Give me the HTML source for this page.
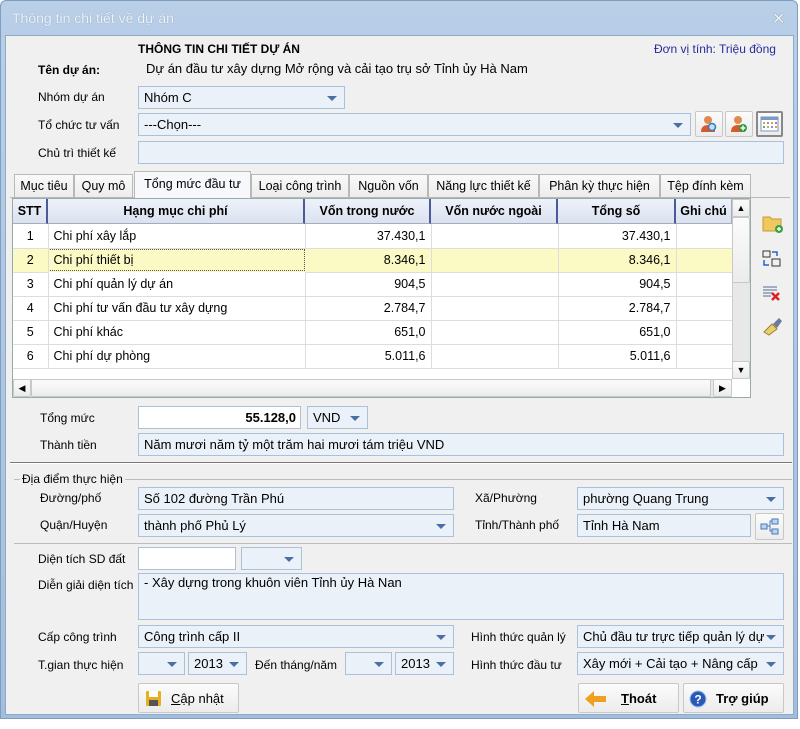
<!DOCTYPE html>
<html><head><meta charset="utf-8"><style>
*{box-sizing:border-box;margin:0;padding:0}
body{width:800px;height:729px;background:#fff;font-family:"Liberation Sans",Arial,sans-serif;font-size:12px;color:#000;position:relative;overflow:hidden}
.a{position:absolute}
.win{left:0;top:0;width:798px;height:719px;background:linear-gradient(#b9cfe8,#a3bedd);border-radius:6px 6px 0 0;border:1px solid #7f9dbf}
.body{left:5px;top:35px;width:789px;height:680px;background:#f0f0f0;border:1px solid #8fa9c8}
.lbl{white-space:nowrap}
.inp{background:#eaf1f9;border:1px solid #abc1d9;height:23px;line-height:21px;padding-left:5px;white-space:nowrap;overflow:hidden;font-size:13px}
.wh{background:#fff}
.dd::after{content:"";position:absolute;right:7px;top:9px;border-left:5px solid transparent;border-right:5px solid transparent;border-top:5px solid #4a6fa5}
.btn{background:linear-gradient(#fbfbfb,#ececec);border:1px solid #c8c8c8;border-radius:2px}
.tab{top:174px;height:23px;border:1px solid #b8b8b8;border-bottom:none;background:linear-gradient(#fafafa,#ececec);line-height:22px;text-align:center;font-size:12.5px}
.grid{left:12px;top:198px;width:739px;height:200px;border:1px solid #9aa;background:#fff}
.th{top:0;height:25px;background:linear-gradient(#eef2fa,#dae2f0);border-right:2px solid #4b5a9a;border-bottom:1px solid #aab;font-weight:bold;line-height:25px;text-align:center;font-size:12.5px}
.td{height:24px;border-right:1px solid #ddd;border-bottom:1px solid #ddd;line-height:22px;padding:0 5px;white-space:nowrap}
.r{text-align:right}
</style></head><body>
<div class="a win"></div>
<div class="a lbl" style="left:12px;top:10px;font-size:14px;color:#eef2f8;text-shadow:0 0 1px #7990b0">Thông tin chi tiết về dự án</div>
<div class="a" style="left:772px;top:9px;font-size:16px;color:#eef2f8;text-shadow:0 0 1px #556">✕</div>
<div class="a body"></div>

<div class="a lbl" style="left:138px;top:42px;font-weight:bold">THÔNG TIN CHI TIẾT DỰ ÁN</div>
<div class="a lbl" style="left:654px;top:42px;color:#2a2aa0">Đơn vị tính: Triệu đồng</div>
<div class="a lbl" style="left:38px;top:63px;font-weight:bold">Tên dự án:</div>
<div class="a lbl" style="left:146px;top:61px;font-size:13px">Dự án đầu tư xây dựng Mở rộng và cải tạo trụ sở Tỉnh ủy Hà Nam</div>

<div class="a lbl" style="left:38px;top:90px">Nhóm dự án</div>
<div class="a inp dd" style="left:138px;top:86px;width:207px">Nhóm C</div>
<div class="a lbl" style="left:38px;top:118px">Tổ chức tư vấn</div>
<div class="a inp dd" style="left:138px;top:113px;width:553px">---Chọn---</div>
<div class="a btn" style="left:695px;top:111px;width:28px;height:26px"><svg width="26" height="24"><circle cx="12" cy="8" r="4" fill="#e08a50"/><path d="M5 20q0-7 7-7t7 7z" fill="#d65a2a"/><circle cx="16" cy="15" r="3.5" fill="#bfe0f8" stroke="#3a78b8" stroke-width="1.5"/></svg></div>
<div class="a btn" style="left:725px;top:111px;width:28px;height:26px"><svg width="26" height="24"><circle cx="12" cy="8" r="4" fill="#e08a50"/><path d="M5 20q0-7 7-7t7 7z" fill="#d65a2a"/><circle cx="17" cy="16" r="4" fill="#2a9a3a"/><path d="M17 13.5v5M14.5 16h5" stroke="#fff" stroke-width="1.5"/></svg></div>
<div class="a btn" style="left:756px;top:111px;width:27px;height:26px;border:2px solid #888"><svg width="23" height="22"><rect x="3" y="4" width="17" height="14" fill="#fff" stroke="#7a9bc6"/><rect x="3" y="4" width="17" height="3" fill="#7a9bc6"/><g fill="#e8a040"><rect x="5" y="9" width="2" height="2"/><rect x="9" y="9" width="2" height="2" fill="#6aa0e0"/><rect x="13" y="9" width="2" height="2"/><rect x="17" y="9" width="2" height="2" fill="#d060c0"/><rect x="5" y="13" width="2" height="2" fill="#60b060"/><rect x="9" y="13" width="2" height="2"/><rect x="13" y="13" width="2" height="2" fill="#6aa0e0"/><rect x="17" y="13" width="2" height="2"/></g></svg></div>
<div class="a lbl" style="left:38px;top:146px">Chủ trì thiết kế</div>
<div class="a inp" style="left:138px;top:141px;width:646px"></div>

<div class="a tab" style="left:14px;width:60px">Mục tiêu</div>
<div class="a tab" style="left:74px;width:59px">Quy mô</div>
<div class="a tab" style="left:251px;width:98px">Loại công trình</div>
<div class="a tab" style="left:349px;width:79px">Nguồn vốn</div>
<div class="a tab" style="left:428px;width:111px">Năng lực thiết kế</div>
<div class="a tab" style="left:539px;width:121px">Phân kỳ thực hiện</div>
<div class="a tab" style="left:660px;width:91px">Tệp đính kèm</div>
<div class="a" style="left:10px;top:197px;width:780px;height:1px;background:#b8b8b8"></div>
<div class="a tab" style="left:134px;top:171px;width:117px;height:27px;background:#f6f8fb;line-height:24px">Tổng mức đầu tư</div>

<div class="a grid">
<div class="a th" style="left:0;width:35px">STT</div>
<div class="a th" style="left:35px;width:257px">Hạng mục chi phí</div>
<div class="a th" style="left:292px;width:126px">Vốn trong nước</div>
<div class="a th" style="left:418px;width:127px">Vốn nước ngoài</div>
<div class="a th" style="left:545px;width:118px">Tổng số</div>
<div class="a th" style="left:663px;width:56px;border-right:1px solid #aab">Ghi chú</div>
<div class="a" style="left:0;top:49px;width:719px;height:24px;background:#fbf9c4"></div>
<div class="a" style="left:35px;top:50px;width:257px;height:22px;border:1px dotted #555"></div>
<div class="a" style="left:0;top:25px">
<table style="border-collapse:collapse;font-size:12.5px">
<tr><td class="td" style="width:35px;text-align:center">1</td><td class="td" style="width:257px">Chi phí xây lắp</td><td class="td r" style="width:126px">37.430,1</td><td class="td" style="width:127px"></td><td class="td r" style="width:118px">37.430,1</td><td class="td" style="width:56px"></td></tr>
<tr><td class="td" style="text-align:center">2</td><td class="td" style="border:none">Chi phí thiết bị</td><td class="td r">8.346,1</td><td class="td"></td><td class="td r">8.346,1</td><td class="td"></td></tr>
<tr><td class="td" style="text-align:center">3</td><td class="td">Chi phí quản lý dự án</td><td class="td r">904,5</td><td class="td"></td><td class="td r">904,5</td><td class="td"></td></tr>
<tr><td class="td" style="text-align:center">4</td><td class="td">Chi phí tư vấn đầu tư xây dựng</td><td class="td r">2.784,7</td><td class="td"></td><td class="td r">2.784,7</td><td class="td"></td></tr>
<tr><td class="td" style="text-align:center">5</td><td class="td">Chi phí khác</td><td class="td r">651,0</td><td class="td"></td><td class="td r">651,0</td><td class="td"></td></tr>
<tr><td class="td" style="text-align:center">6</td><td class="td">Chi phí dự phòng</td><td class="td r">5.011,6</td><td class="td"></td><td class="td r">5.011,6</td><td class="td"></td></tr>
</table></div>
<div class="a" style="left:719px;top:0;width:18px;height:180px;background:#e8e8e8;border-left:1px solid #ccc"></div>
<div class="a btn" style="left:719px;top:0;width:18px;height:18px;text-align:center;font-size:9px;line-height:16px">▲</div>
<div class="a btn" style="left:719px;top:18px;width:18px;height:66px"></div>
<div class="a btn" style="left:719px;top:162px;width:18px;height:18px;text-align:center;font-size:9px;line-height:16px">▼</div>
<div class="a" style="left:0;top:180px;width:719px;height:18px;background:#e8e8e8;border-top:1px solid #ccc"></div>
<div class="a btn" style="left:0;top:180px;width:18px;height:18px;text-align:center;font-size:9px;line-height:16px">◀</div>
<div class="a btn" style="left:18px;top:180px;width:680px;height:18px"></div>
<div class="a btn" style="left:700px;top:180px;width:19px;height:18px;text-align:center;font-size:9px;line-height:16px">▶</div>
</div>

<svg class="a" style="left:760px;top:212px" width="26" height="130">
<path d="M3 5h7l2 2h9v12H3z" fill="#f0c860" stroke="#c89a30"/><circle cx="19" cy="17" r="4" fill="#3aa040"/><path d="M19 15v4M17 17h4" stroke="#fff" stroke-width="1.4"/>
<g transform="translate(0,36)"><rect x="3" y="3" width="7" height="6" fill="none" stroke="#333"/><rect x="12" y="11" width="8" height="7" fill="none" stroke="#333"/><path d="M12 4h5v4M4 12v5h5" stroke="#2a60d0" stroke-width="1.5" fill="none"/></g>
<g transform="translate(0,70)"><path d="M3 5h14M3 8h14M3 11h10M3 14h8" stroke="#8898b0" stroke-width="1.5"/><path d="M12 11l7 7M19 11l-7 7" stroke="#e02020" stroke-width="2.5"/></g>
<g transform="translate(0,104)"><path d="M4 16l8-8 5 5-8 6z" fill="#e8d070" stroke="#a08030"/><path d="M13 8l6-6 3 3-5 7" fill="#6a7aa0"/></g>
</svg>

<div class="a lbl" style="left:40px;top:411px">Tổng mức</div>
<div class="a inp wh r" style="left:138px;top:406px;width:163px;font-weight:bold;padding-right:4px;text-align:right">55.128,0</div>
<div class="a inp dd" style="left:307px;top:406px;width:61px">VND</div>
<div class="a lbl" style="left:40px;top:438px">Thành tiền</div>
<div class="a inp" style="left:138px;top:433px;width:646px">Năm mươi năm tỷ một trăm hai mươi tám triệu VND</div>
<div class="a" style="left:10px;top:462px;width:782px;height:2px;background:#7a7a7a;border-bottom:1px solid #fff"></div>

<div class="a" style="left:14px;top:479px;width:778px;height:1px;background:#bbb"></div>
<div class="a lbl" style="left:20px;top:472px;background:#f0f0f0;padding:0 2px">Địa điểm thực hiện</div>
<div class="a lbl" style="left:40px;top:491px">Đường/phố</div>
<div class="a inp" style="left:138px;top:487px;width:316px">Số 102 đường Trần Phú</div>
<div class="a lbl" style="left:475px;top:491px">Xã/Phường</div>
<div class="a inp dd" style="left:577px;top:487px;width:207px">phường Quang Trung</div>
<div class="a lbl" style="left:40px;top:518px">Quận/Huyện</div>
<div class="a inp dd" style="left:138px;top:514px;width:316px">thành phố Phủ Lý</div>
<div class="a lbl" style="left:475px;top:518px">Tỉnh/Thành phố</div>
<div class="a inp" style="left:577px;top:514px;width:174px">Tỉnh Hà Nam</div>
<div class="a btn" style="left:755px;top:513px;width:29px;height:27px"><svg width="27" height="25"><rect x="5" y="10" width="6" height="5" fill="#bcd4f0" stroke="#4a78b8"/><rect x="16" y="5" width="6" height="5" fill="#bcd4f0" stroke="#4a78b8"/><rect x="16" y="15" width="6" height="5" fill="#bcd4f0" stroke="#4a78b8"/><path d="M11 12h3v-5h2M14 12v5h2" stroke="#4a78b8" fill="none"/></svg></div>
<div class="a" style="left:14px;top:543px;width:778px;height:1px;background:#bbb"></div>

<div class="a lbl" style="left:38px;top:552px">Diện tích SD đất</div>
<div class="a inp wh" style="left:138px;top:547px;width:98px"></div>
<div class="a inp dd" style="left:241px;top:547px;width:61px"></div>
<div class="a lbl" style="left:38px;top:578px">Diễn giải diện tích</div>
<div class="a inp" style="left:138px;top:573px;width:646px;height:47px;line-height:18px">- Xây dựng trong khuôn viên Tỉnh ủy Hà Nan</div>
<div class="a lbl" style="left:38px;top:630px">Cấp công trình</div>
<div class="a inp dd" style="left:138px;top:625px;width:316px">Công trình cấp II</div>
<div class="a lbl" style="left:471px;top:630px">Hình thức quản lý</div>
<div class="a inp dd" style="left:577px;top:625px;width:207px">Chủ đầu tư trực tiếp quản lý dự</div>
<div class="a lbl" style="left:38px;top:658px">T.gian thực hiện</div>
<div class="a inp dd" style="left:138px;top:652px;width:47px"></div>
<div class="a inp dd" style="left:188px;top:652px;width:59px">2013</div>
<div class="a lbl" style="left:255px;top:658px">Đến tháng/năm</div>
<div class="a inp dd" style="left:345px;top:652px;width:47px"></div>
<div class="a inp dd" style="left:395px;top:652px;width:59px">2013</div>
<div class="a lbl" style="left:471px;top:658px">Hình thức đầu tư</div>
<div class="a inp dd" style="left:577px;top:652px;width:207px">Xây mới + Cải tạo + Nâng cấp</div>

<div class="a btn" style="left:138px;top:683px;width:101px;height:30px"><svg class="a" style="left:6px;top:6px" width="18" height="18"><rect x="1" y="1" width="15" height="15" rx="1" fill="#e8b020"/><rect x="4" y="1" width="9" height="6" fill="#fff"/><rect x="4" y="10" width="9" height="6" fill="#555"/></svg><span class="a" style="left:32px;top:7px;font-size:13px"><u>C</u>ập nhật</span></div>
<div class="a btn" style="left:578px;top:683px;width:101px;height:30px"><svg class="a" style="left:5px;top:6px" width="24" height="18"><path d="M1 9l9-8v5h12v6H10v5z" fill="#f0a020"/></svg><span class="a" style="left:42px;top:7px;font-size:13px;font-weight:bold"><u>T</u>hoát</span></div>
<div class="a btn" style="left:683px;top:683px;width:101px;height:30px"><svg class="a" style="left:5px;top:6px" width="18" height="18"><circle cx="9" cy="9" r="8" fill="#2a5ab8" stroke="#a0c0ee"/><text x="9" y="13.5" font-size="12" font-weight="bold" fill="#fff" text-anchor="middle" font-family="Liberation Sans">?</text></svg><span class="a" style="left:32px;top:7px;font-size:13px;font-weight:bold">Trợ <u>g</u>iúp</span></div>
</body></html>
